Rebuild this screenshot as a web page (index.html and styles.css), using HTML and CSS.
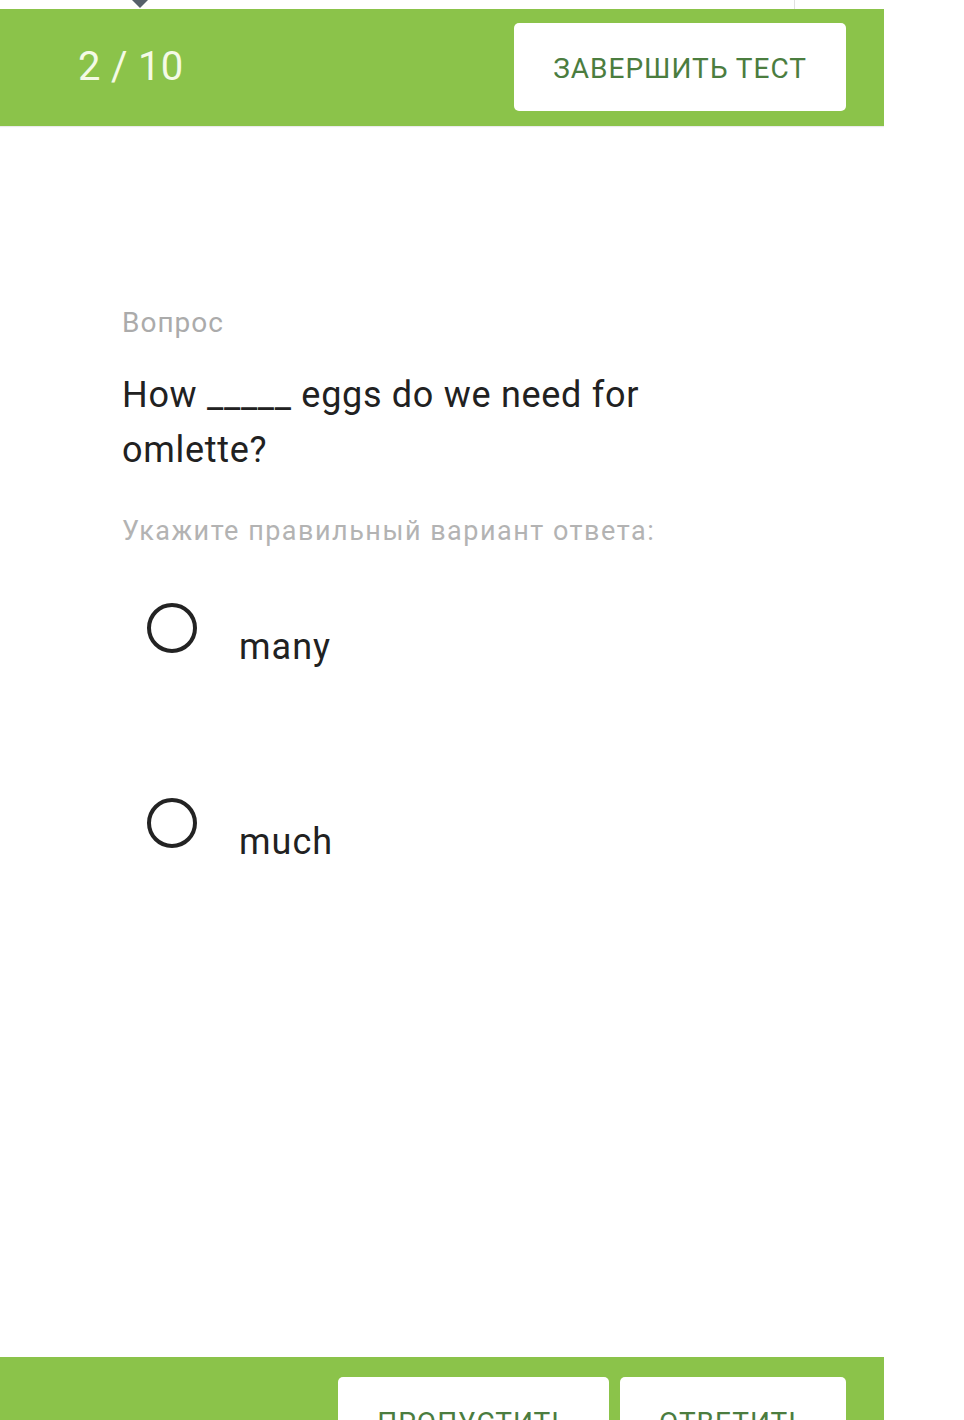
FILE: index.html
```html
<!DOCTYPE html>
<html lang="ru">
<head>
<meta charset="utf-8">
<title>Тест</title>
<link rel="stylesheet" href="styles.css">
</head>
<body>
<div class="page">
  <div class="topstrip">
    <span class="diamond"></span>
    <span class="vline"></span>
  </div>
  <header class="bar bar-top">
    <div class="counter">2 / 10</div>
    <button class="btn">Завершить тест</button>
  </header>
  <main class="content">
    <div class="label">Вопрос</div>
    <div class="question">How _____ eggs do we need for omlette?</div>
    <div class="hint">Укажите правильный вариант ответа:</div>
    <div class="options">
      <div class="option">
        <span class="radio"></span>
        <span class="opt-text">many</span>
      </div>
      <div class="option">
        <span class="radio"></span>
        <span class="opt-text">much</span>
      </div>
    </div>
  </main>
  <footer class="bar bar-bottom">
    <button class="btn btn-skip">Пропустить</button>
    <button class="btn btn-answer">Ответить</button>
  </footer>
</div>
</body>
</html>
```

FILE: styles.css
```css
* { box-sizing: border-box; }
html, body {
  margin: 0;
  padding: 0;
  background: #ffffff;
  height: 1420px;
  overflow: hidden;
}
body {
  font-family: Roboto, "Noto Sans", "Liberation Sans", sans-serif;
}
.page {
  width: 884px;
  height: 1420px;
  display: flex;
  flex-direction: column;
  overflow: hidden;
}
.topstrip {
  position: relative;
  height: 9px;
  flex: none;
}
.diamond {
  position: absolute;
  left: 120px;
  top: -12px;
  width: 40px;
  height: 20px;
  background: #56606b;
  clip-path: polygon(0 0, 100% 0, 50% 100%);
}
.vline {
  position: absolute;
  left: 794px;
  top: 0;
  width: 1px;
  height: 9px;
  background: #e0e0e0;
}
.bar {
  background: #8bc34a;
  display: flex;
  align-items: flex-start;
  flex: none;
}
.bar-top {
  height: 117px;
  padding: 14px 38px 0 78px;
  justify-content: space-between;
  box-shadow: 0 1px 1px rgba(0, 0, 0, 0.08);
}
.counter {
  color: #f4fae6;
  font-size: 40px;
  line-height: 88px;
  letter-spacing: 0.3px;
}
.btn {
  height: 88px;
  padding: 0 39px;
  border: none;
  border-radius: 5px;
  background: #ffffff;
  color: #4b7d3f;
  font-family: Roboto, "Noto Sans", "Liberation Sans", sans-serif;
  font-size: 28px;
  letter-spacing: 1px;
  text-transform: uppercase;
  line-height: 92px;
}
.content {
  flex: none;
  height: 1231px;
  padding: 180px 0 0 122px;
}
.label {
  font-size: 28px;
  line-height: 33.6px;
  letter-spacing: 1px;
  color: #ababab;
}
.question {
  margin-top: 28px;
  width: 600px;
  font-size: 36px;
  line-height: 55px;
  letter-spacing: 0.7px;
  color: #212121;
}
.hint {
  margin-top: 37px;
  font-size: 27px;
  line-height: 32.4px;
  letter-spacing: 1.5px;
  color: #b3b3b3;
}
.options {
  margin-top: 56px;
  display: flex;
  flex-direction: column;
  gap: 129px;
}
.option {
  display: flex;
  align-items: flex-start;
  padding-left: 25px;
}
.radio {
  width: 50px;
  height: 50px;
  border: 4.5px solid #232323;
  border-radius: 50%;
  flex: none;
}
.opt-text {
  margin-left: 42px;
  margin-top: 23px;
  font-size: 36px;
  line-height: 43.2px;
  letter-spacing: 1px;
  color: #212121;
}
.bar-bottom {
  height: 117px;
  padding: 20px 38px 0 0;
  justify-content: flex-end;
  gap: 11px;
}
```
